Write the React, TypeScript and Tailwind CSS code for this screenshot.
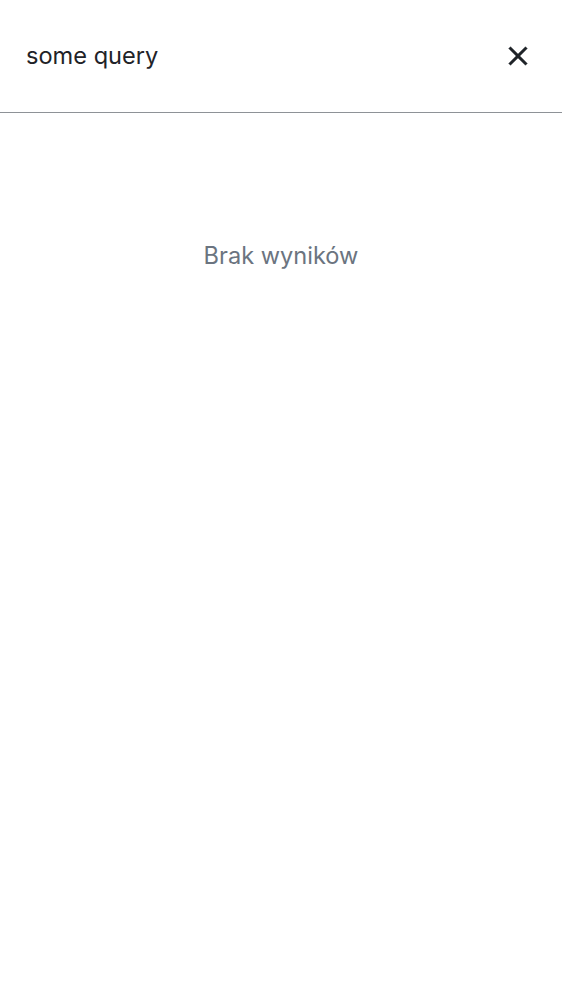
import React from "react";

export default function App() {
  return (
    <div className="min-h-screen bg-white font-['Inter',sans-serif]">
      <header className="flex h-[113px] items-center justify-between border-b border-[#8e9297] pl-[26px] pr-[28px]">
        <span className="text-[23.6px] leading-8 text-[#1f2328]">some query</span>
        <button aria-label="close" className="flex h-8 w-8 items-center justify-center text-[#1f2328]">
          <svg width="32" height="32" viewBox="0 0 24 24" fill="currentColor" stroke="currentColor" strokeWidth="0.3" strokeLinejoin="miter">
            <path d="M19 6.41 17.59 5 12 10.59 6.41 5 5 6.41 10.59 12 5 17.59 6.41 19 12 13.41 17.59 19 19 17.59 13.41 12z" />
          </svg>
        </button>
      </header>
      <main className="flex justify-center pt-[127px]">
        <p className="text-[23.6px] leading-8 text-[#6b7480]">Brak wyników</p>
      </main>
    </div>
  );
}
